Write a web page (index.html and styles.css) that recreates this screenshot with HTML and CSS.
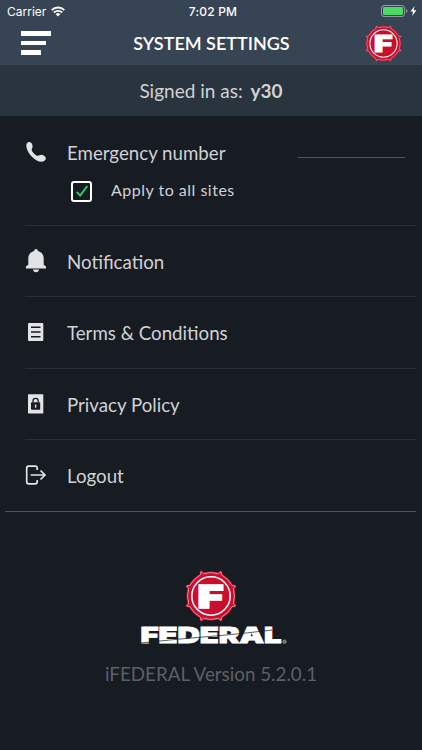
FILE: index.html
```html
<!DOCTYPE html>
<html lang="en">
<head>
    <meta charset="UTF-8">
    <meta name="viewport" content="width=device-width, initial-scale=1.0">
    <title>System Settings | iFEDERAL</title>
    <link rel="stylesheet" href="styles.css">
</head>
<body>
    <svg class="defs" width="0" height="0">
        <symbol id="seal" viewBox="-26 -26 52 52">
            <path id="rim" d="M-10 -24.300L-7.500 -22.300Q0 -24.600 7.500 -22.300L10 -24.300L10.500 -21.100Q17.400 -17.400 21.100 -10.500L24.300 -10L22.300 -7.500Q24.600 0 22.300 7.500L24.300 10L21.100 10.500Q17.400 17.400 10.500 21.100L10 24.300L7.500 22.300Q0 24.600 -7.500 22.300L-10 24.300L-10.500 21.100Q-17.400 17.400 -21.100 10.500L-24.300 10L-22.300 7.500Q-24.600 0 -22.300 -7.500L-24.300 -10L-21.100 -10.500Q-17.400 -17.400 -10.500 -21.100Z" fill="#c8102e" stroke="#c8102e" stroke-width="2.2" stroke-linejoin="round"/>
            <path d="M-10 -24.300L-7.500 -22.300Q0 -24.600 7.500 -22.300L10 -24.300L10.500 -21.100Q17.400 -17.400 21.100 -10.500L24.300 -10L22.300 -7.500Q24.600 0 22.300 7.500L24.300 10L21.100 10.500Q17.400 17.400 10.500 21.100L10 24.300L7.500 22.300Q0 24.600 -7.500 22.300L-10 24.300L-10.500 21.100Q-17.400 17.400 -21.100 10.500L-24.300 10L-22.300 7.500Q-24.600 0 -22.300 -7.500L-24.300 -10L-21.100 -10.500Q-17.400 -17.400 -10.500 -21.100Z" fill="none" stroke="#eba9b4" stroke-width=".8"/>
            <circle r="19.2" fill="#c8102e" stroke="#fff" stroke-width="1.5"/>
        </symbol>
    </svg>

    <header>
        <div class="status-bar">
            <div class="carrier">
                <span>Carrier</span>
                <svg width="14" height="11" viewBox="0 0 14 11" fill="none" stroke="#fff" stroke-width="1.9">
                    <path d="M.7 4.1a9 9 0 0 1 12.6 0M2.9 6.5a5.9 5.9 0 0 1 8.2 0"></path>
                    <path d="M7 10.6L4.7 8.2a3.3 3.3 0 0 1 4.6 0z" fill="#fff" stroke="none"></path>
                </svg>
            </div>
            <span class="time">7:02 PM</span>
            <svg class="battery" width="38" height="12" viewBox="0 0 38 12">
                <rect x=".5" y=".5" width="23" height="11" rx="2.5" fill="none" stroke="#929ba5"/>
                <rect x="2" y="2" width="20" height="8" rx="1" fill="#4cd964"/>
                <path d="M25 4q1.5.4 1.5 2T25 8z" fill="#929ba5"/>
                <path d="M33.5 1L29.5 6.6h2.6L31.2 11l4.2-5.8h-2.7z" fill="#fff"/>
            </svg>
        </div>
        <div class="nav-bar">
            <div class="menu">
                <span></span>
                <span></span>
                <span></span>
            </div>
            <h1>SYSTEM SETTINGS</h1>
            <svg class="nav-logo" width="37" height="37" viewBox="0 0 52 52">
                <use href="#seal" width="52" height="52"/>
                <text x="12.600" y="38" textLength="26" lengthAdjust="spacingAndGlyphs" class="seal-letter">F</text>
            </svg>
        </div>
    </header>

    <div class="signed-in">Signed in as: <b>y30</b></div>

    <main>
        <section class="item emergency">
            <div class="line">
                <svg class="icon" width="22" height="22" viewBox="0 0 22 22">
                    <path d="M1.3 4.5C1.3 2 3 .8 4.6 1.1c1.8.4 3 2.3 3 4.2 0 1.6-1 2.3-.9 3.6.2 1.9 3.9 5.6 6 5.9 1.3.1 1.9-1 3.500-1 2 0 4.300 1.500 4.600 3.300.3 2-1.800 3.700-4.300 3.700C10 20.800 1.300 11.500 1.300 4.500z" fill="currentColor"/>
                </svg>
                <span class="label">Emergency number</span>
                <span class="number-field"></span>
            </div>
            <div class="apply">
                <span class="checkbox">
                    <svg width="14" height="14" viewBox="0 0 14 14" fill="none" stroke="#2fd06a" stroke-width="1.9">
                        <path d="M1.700 7.800L5.200 11.600L12.300 2"></path>
                    </svg>
                </span>
                <span class="apply-text">Apply to all sites</span>
            </div>
        </section>
        <section class="item">
            <svg class="icon" width="22" height="24" viewBox="0 0 22 24" fill="currentColor">
                <path d="M11 0c1.200 0 1.800.8 1.800 1.900 3.700.9 5.900 3.700 5.900 7.600v6.200l2.300 1.800v2H.9v-2l2.400-1.800V9.500c0-3.900 2.200-6.700 5.900-7.600C9.200.8 9.800 0 11 0zM8 20.500h6c-.2 1.700-1.300 2.700-3 2.700s-2.800-1-3-2.700z"/>
            </svg>
            <span class="label">Notification</span>
        </section>
        <section class="item">
            <svg class="icon" width="22" height="20" viewBox="0 0 22 20">
                <rect x="3" y="1" width="15.300" height="18" rx="1" fill="currentColor"/>
                <path d="M6 5.300h9.500M6 10h9.500M6 14.700h9.500" stroke="#171b22" stroke-width="1.500"/>
            </svg>
            <span class="label">Terms &amp; Conditions</span>
        </section>
        <section class="item">
            <svg class="icon" width="22" height="20" viewBox="0 0 22 20">
                <rect x="3" y=".300" width="15.300" height="19.200" rx=".5" fill="currentColor"/>
                <rect x="6" y="8.200" width="9.200" height="7.500" rx=".8" fill="#171b22"/>
                <path d="M8 8.500V7a2.600 2.600 0 0 1 5.200 0v1.500" fill="none" stroke="#171b22" stroke-width="1.300"/>
                <path d="M10.600 10.500v3.200" stroke="#e2e3e5" stroke-width="1.400"/>
            </svg>
            <span class="label">Privacy Policy</span>
        </section>
        <section class="item">
            <svg class="icon" width="22" height="20" viewBox="0 0 22 20" fill="none" stroke="currentColor" stroke-width="1.700">
                <path d="M12.200 5V3.200a2 2 0 0 0-2-2H3.700a2 2 0 0 0-2 2v13.600a2 2 0 0 0 2 2h6.500a2 2 0 0 0 2-2V15M5.600 10h14M15.500 5.500L20 10l-4.500 4.500"></path>
            </svg>
            <span class="label">Logout</span>
        </section>
    </main>

    <footer>
        <svg class="brand" width="150" height="78" viewBox="0 0 150 78">
            <use href="#seal" x="48" y="0" width="52" height="52"/>
            <text x="60.600" y="38" textLength="26" lengthAdjust="spacingAndGlyphs" class="seal-letter">F</text>
            <text class="brand-name" x="3.500" y="73.300" textLength="141" lengthAdjust="spacingAndGlyphs">FEDERAL</text>
            <path class="cut" d="M4 73Q40 69 72 66.500T135 60"></path>
            <circle cx="147.500" cy="71.700" r="1.700" fill="#5c6067" stroke="#a5a8ac" stroke-width=".8"/>
        </svg>
        <p class="version">iFEDERAL Version 5.2.0.1</p>
    </footer>
</body>
</html>
```
FILE: styles.css
```css
:root {
    --bg: #171b22;
    --header: #374453;
    --bar: #29343e;
    --text: #d0d2d5;
}

* {
    box-sizing: border-box;
    margin: 0;
    padding: 0;
}

body {
    height: 750px;
    font-family: Lato, sans-serif;
    background: var(--bg);
    color: var(--text);
    overflow: hidden;
}

.defs,
.brand {
    display: block;
}

.defs {
    height: 0;
}

header {
    height: 65px;
    background: var(--header);
    color: #fff;
}

.status-bar {
    display: grid;
    grid-template-columns: 1fr auto 1fr;
    align-items: center;
    height: 22px;
    padding: 0 3px 0 7px;
    font: 12px Inter, sans-serif;
}

.carrier {
    display: flex;
    align-items: center;
    gap: 5px;
}

.time {
    font-weight: 500;
    letter-spacing: 0.2px;
}

.battery {
    justify-self: end;
}

.nav-bar {
    display: grid;
    grid-template-columns: 1fr auto 1fr;
    align-items: center;
    height: 42px;
    padding: 0 20px 0 21px;
}

.menu {
    display: flex;
    flex-direction: column;
    gap: 5px;
}

.menu span {
    width: 30px;
    height: 4.5px;
    background: #fff;
}

.menu span:nth-child(2) {
    width: 25px;
}

.menu span:nth-child(3) {
    width: 20px;
}

h1 {
    font-size: 18px;
    font-weight: 600;
    line-height: 20px;
    padding-bottom: 1px;
}

.nav-logo {
    justify-self: end;
}

.seal-letter {
    font: 900 32px Inter, sans-serif;
    fill: #fff;
    stroke: #fff;
    stroke-width: 1.6;
}

.signed-in {
    height: 51px;
    background: var(--bar);
    font-size: 19px;
    line-height: 52px;
    text-align: center;
}

.signed-in b {
    margin-left: 3px;
}

main {
    margin: 0 6px 0 5px;
    border-bottom: 1px solid #4c5462;
}

.item {
    display: flex;
    align-items: center;
    height: 71.25px;
    margin-left: 20px;
    border-bottom: 1px solid #2b3038;
}

.item:last-child {
    border-bottom: none;
}

.emergency {
    display: block;
    height: 110px;
    padding-top: 23px;
}

.line {
    display: flex;
    align-items: center;
    height: 26px;
}

.icon {
    flex: none;
    margin-right: 20px;
    color: #e2e3e5;
}

.label {
    padding-top: 2px;
    font-size: 18.7px;
}

.number-field {
    width: 107px;
    height: 1px;
    margin: 11px 11px 0 auto;
    background: #505763;
}

.apply {
    display: flex;
    align-items: center;
    gap: 19px;
    height: 24px;
    margin: 14px 0 0 46px;
}

.checkbox {
    display: flex;
    align-items: center;
    justify-content: center;
    width: 21px;
    height: 21px;
    border: 2px solid #fff;
    border-radius: 3px;
}

.apply-text {
    padding-bottom: 3px;
    font-size: 16px;
    letter-spacing: 0.5px;
}

footer {
    display: flex;
    flex-direction: column;
    align-items: center;
    padding-top: 58px;
}

.brand {
    margin-left: 2px;
}

.brand-name {
    font: 900 22px Inter, sans-serif;
    fill: #fff;
    stroke: #fff;
    stroke-width: 0.9;
}

.cut {
    fill: none;
    stroke: var(--bg);
    stroke-width: 0.7;
}

.version {
    margin-top: 14px;
    font-size: 18.8px;
    color: #5c6067;
}
```
